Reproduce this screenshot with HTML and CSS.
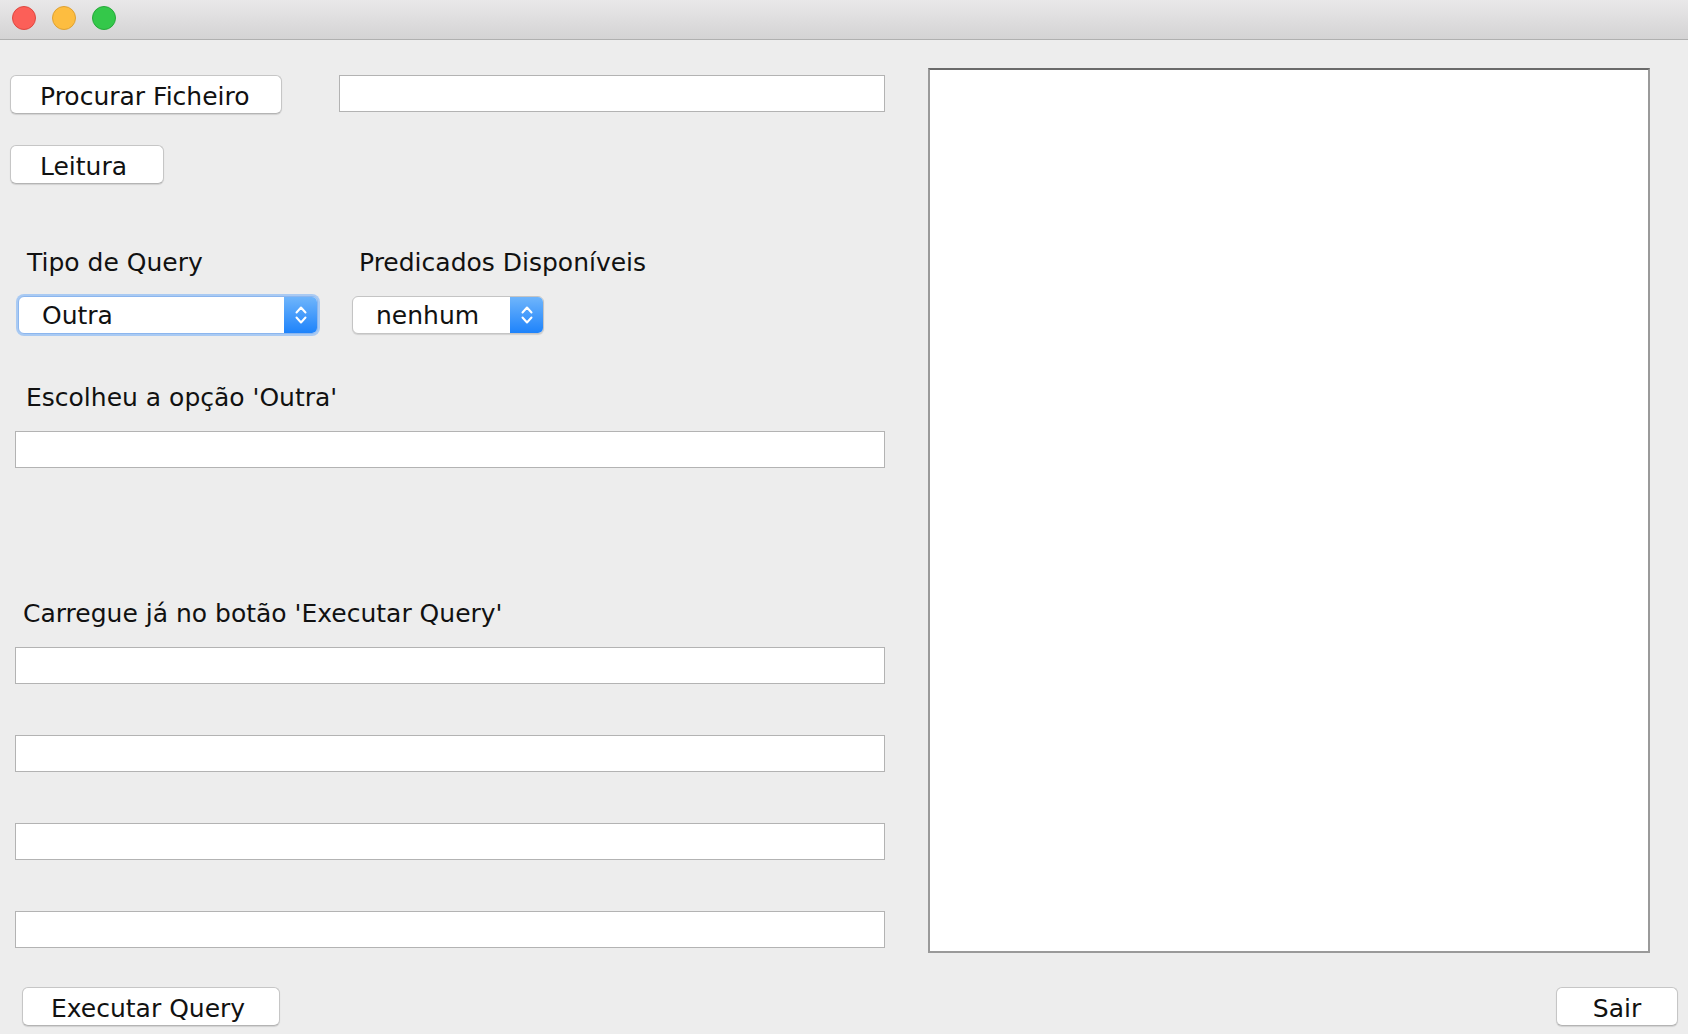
FILE: index.html
```html
<!DOCTYPE html>
<html lang="pt">
<head>
<meta charset="utf-8">
<title>Query</title>
<link rel="stylesheet" href="styles.css">
</head>
<body>
<div class="window">
  <div class="titlebar">
    <span class="light red"></span>
    <span class="light yellow"></span>
    <span class="light green"></span>
  </div>
  <div class="content">
    <div class="left">
      <div class="row row-file">
        <button class="btn btn-procurar">Procurar Ficheiro</button>
        <div class="field field-file"></div>
      </div>
      <div class="row row-leitura">
        <button class="btn btn-leitura">Leitura</button>
      </div>
      <div class="row row-query">
        <div class="group group-tipo">
          <div class="label label-tipo">Tipo de Query</div>
          <div class="combo combo-tipo focused">
            <span class="combo-text">Outra</span>
            <span class="combo-arrow">
              <svg width="16" height="26" viewBox="0 0 16 26"><path d="M3.5 10.5 L8 5.5 L12.5 10.5" fill="none" stroke="#fff" stroke-width="2" stroke-linecap="round" stroke-linejoin="round"/><path d="M3.5 15.5 L8 20.5 L12.5 15.5" fill="none" stroke="#fff" stroke-width="2" stroke-linecap="round" stroke-linejoin="round"/></svg>
            </span>
          </div>
        </div>
        <div class="group group-pred">
          <div class="label label-pred">Predicados Disponíveis</div>
          <div class="combo combo-pred">
            <span class="combo-text">nenhum</span>
            <span class="combo-arrow">
              <svg width="16" height="26" viewBox="0 0 16 26"><path d="M3.5 10.5 L8 5.5 L12.5 10.5" fill="none" stroke="#fff" stroke-width="2" stroke-linecap="round" stroke-linejoin="round"/><path d="M3.5 15.5 L8 20.5 L12.5 15.5" fill="none" stroke="#fff" stroke-width="2" stroke-linecap="round" stroke-linejoin="round"/></svg>
            </span>
          </div>
        </div>
      </div>
      <div class="label label-escolheu">Escolheu a opção 'Outra'</div>
      <div class="field field-wide field-first"></div>
      <div class="label label-carregue">Carregue já no botão 'Executar Query'</div>
      <div class="field field-wide field-a"></div>
      <div class="field field-wide field-b"></div>
      <div class="field field-wide field-b"></div>
      <div class="field field-wide field-b"></div>
    </div>
    <div class="output"></div>
  </div>
  <div class="bottom">
    <button class="btn btn-executar">Executar Query</button>
    <button class="btn btn-sair">Sair</button>
  </div>
</div>
</body>
</html>
```
FILE: styles.css
```css
* { box-sizing: border-box; }
html, body { margin: 0; padding: 0; }
body {
  background: #ededed;
  font-family: "DejaVu Sans", "Noto Sans", sans-serif;
  font-size: 25px;
  color: #111;
}
.window {
  width: 1688px;
  height: 1034px;
  display: flex;
  flex-direction: column;
  overflow: hidden;
}
.titlebar {
  height: 40px;
  flex: none;
  background: linear-gradient(#e9e8e9, #d4d3d4);
  border-bottom: 1px solid #b0b0b0;
  display: flex;
  gap: 16px;
  padding: 6px 0 0 12px;
}
.light {
  width: 24px;
  height: 24px;
  border-radius: 50%;
  display: block;
}
.red { background: #fc5f58; border: 1px solid #de4840; }
.yellow { background: #fdbd40; border: 1px solid #dea133; }
.green { background: #34c84a; border: 1px solid #27a93a; }

.content {
  display: flex;
  flex: none;
}
.left {
  width: 885px;
  padding-top: 35px;
  display: flex;
  flex-direction: column;
}
.row { display: flex; align-items: flex-start; }
.btn {
  font-family: "DejaVu Sans", "Noto Sans", sans-serif;
  font-size: 25px;
  color: #111;
  background: #fff;
  border: 1px solid #c6c6c6;
  border-bottom-color: #b4b4b4;
  border-radius: 6px;
  box-shadow: 0 1px 1px rgba(0,0,0,0.12);
  height: 39px;
  padding: 3px 0 0 29px;
  line-height: 33px;
  text-align: left;
  margin: 0;
  white-space: nowrap;
}
.btn-procurar { width: 272px; margin-left: 10px; }
.field {
  background: #fff;
  border: 1px solid #b3b3b3;
  height: 37px;
}
.field-file { width: 546px; margin-left: 57px; }
.row-leitura { margin-top: 31px; }
.btn-leitura { width: 154px; margin-left: 10px; }

.row-query { margin-top: 65px; }
.label {
  line-height: 28px;
  height: 28px;
  white-space: nowrap;
}
.group-tipo { margin-left: 18px; }
.group-pred { margin-left: 34px; }
.label-tipo { padding-left: 9px; }
.label-pred { padding-left: 7px; }
.combo {
  margin-top: 19px;
  height: 38px;
  background: #fff;
  border: 1px solid #c4c4c4;
  border-radius: 6px;
  box-shadow: 0 1px 1px rgba(0,0,0,0.12);
  display: flex;
  overflow: hidden;
}
.combo.focused {
  border-color: #8cb6ee;
  box-shadow: 0 0 0 2px #a9caf3;
}
.combo-tipo { width: 300px; }
.combo-pred { width: 192px; }
.combo-text {
  flex: 1;
  padding: 2px 0 0 23px;
  line-height: 34px;
}
.combo-arrow {
  width: 33px;
  flex: none;
  background: linear-gradient(#6fb5fb, #1e83fb);
  display: flex;
  align-items: center;
  justify-content: center;
}

.label-escolheu { margin-top: 50px; padding-left: 26px; }
.field-wide { width: 870px; margin-left: 15px; }
.field-first { margin-top: 19px; }
.label-carregue { margin-top: 132px; padding-left: 23px; }
.field-a { margin-top: 19px; }
.field-b { margin-top: 51px; }

.output {
  margin-top: 28px;
  margin-left: 43px;
  width: 722px;
  height: 885px;
  background: #fff;
  border: 2px solid #9a9a9a;
  border-top-color: #6a6a6a;
}

.bottom {
  display: flex;
  justify-content: space-between;
  margin-top: 34px;
  padding: 0 10px 0 22px;
}
.btn-executar { width: 258px; padding-left: 28px; }
.btn-sair { width: 122px; padding-left: 0; text-align: center; }
```
